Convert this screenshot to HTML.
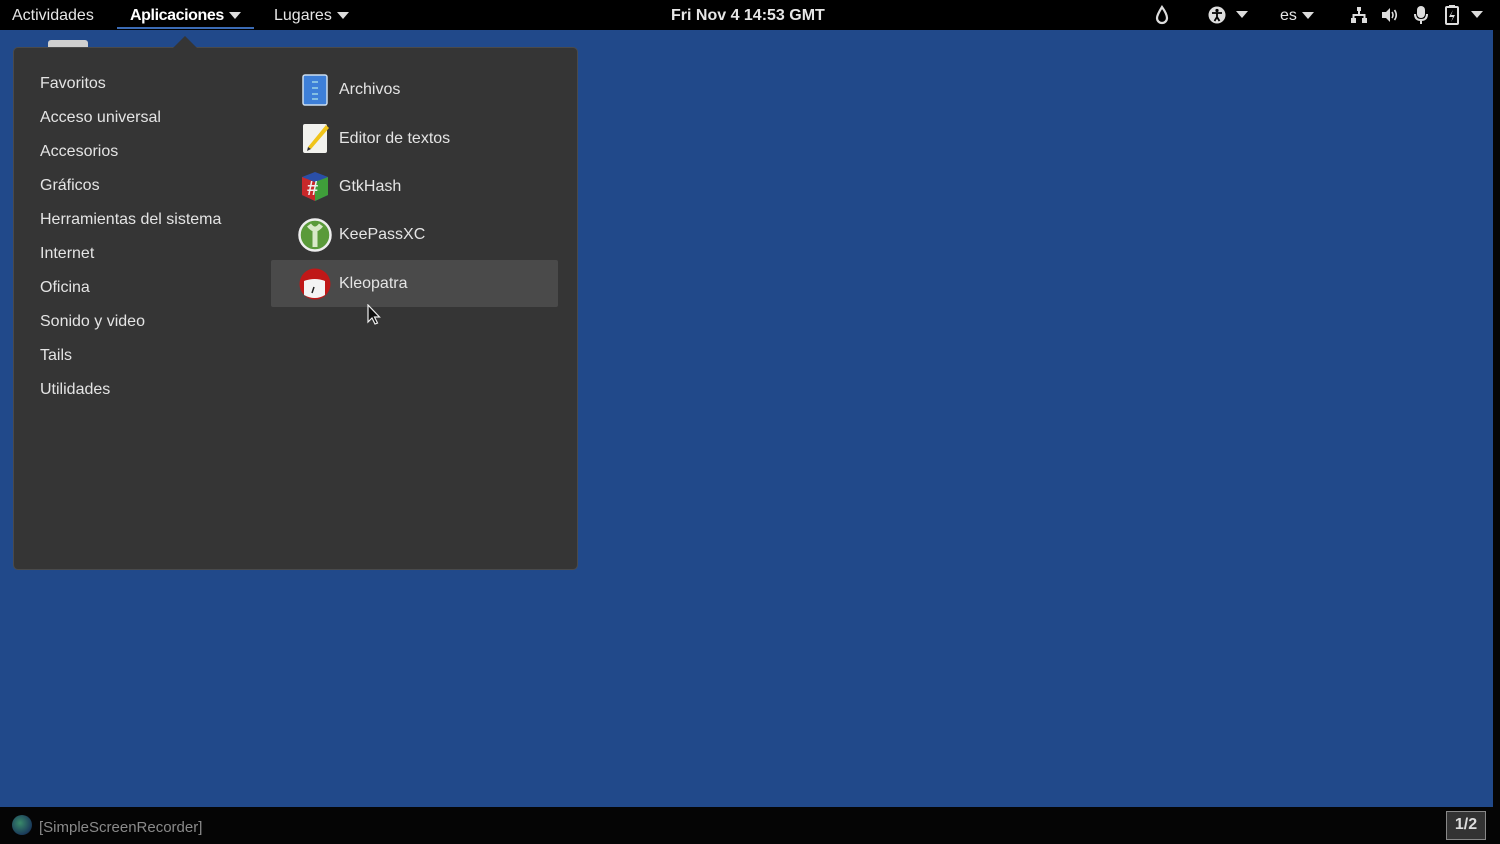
<!DOCTYPE html>
<html><head><meta charset="utf-8"><style>
*{margin:0;padding:0;box-sizing:border-box}
body{width:1500px;height:844px;background:#050505;position:relative;overflow:hidden;font-family:"Liberation Sans","DejaVu Sans",sans-serif;color:#e8e8e8}
.top{position:absolute;left:0;top:0;width:1500px;height:30px;background:#000;font-size:16px}
.top span{position:absolute;top:7px;color:#e6e6e6}
.tri{display:inline-block;width:0;height:0;border-left:6px solid transparent;border-right:6px solid transparent;border-top:7px solid #ddd;vertical-align:middle;margin-left:5px}
.desk{position:absolute;left:0;top:30px;width:1493px;height:777px;background:#21498a}
.menu{position:absolute;left:13px;top:47px;width:565px;height:523px;background:#353535;border:1px solid #4a4a4a;border-radius:5px}
.arrow{position:absolute;left:173px;top:36px;width:0;height:0;border-left:12px solid transparent;border-right:12px solid transparent;border-bottom:12px solid #353535}
.cat{position:absolute;left:40px;font-size:16px;color:#e4e4e4}
.app{position:absolute;left:339px;font-size:16px;color:#e4e4e4}
.hl{position:absolute;left:271px;top:260px;width:287px;height:47px;background:#4a4a4a;border-radius:2px}
.bot{position:absolute;left:0;top:807px;width:1500px;height:37px;background:#050505}
</style></head><body>
<div class="top">
<span style="left:12px">Actividades</span>
<span style="left:130px;color:#fff;font-weight:bold;letter-spacing:-0.4px">Aplicaciones<i class="tri"></i></span>
<div style="position:absolute;left:117px;top:27px;width:137px;height:2px;background:#3b6bb5"></div>
<span style="left:274px">Lugares<i class="tri"></i></span>
<span style="left:671px;font-weight:bold">Fri Nov 4  14:53 GMT</span>
<svg style="position:absolute;left:1153px;top:5px" width="18" height="20"><path d="M9 2 Q4 10 4 13 A5 5 0 0 0 14 13 Q14 9 9 2Z" fill="none" stroke="#ddd" stroke-width="2.2"/></svg>
<svg style="position:absolute;left:1208px;top:6px" width="18" height="18"><circle cx="9" cy="9" r="8.5" fill="#ddd"/><circle cx="9" cy="4.5" r="1.6" fill="#000"/><path d="M4 7h10M9 7v4l-2.5 4M9 11l2.5 4" stroke="#000" stroke-width="1.8" fill="none"/></svg>
<span style="left:1236px;top:6px"><i class="tri" style="margin:0"></i></span>
<span style="left:1280px">es<i class="tri"></i></span>
<svg style="position:absolute;left:1350px;top:6px" width="18" height="18"><rect x="7" y="1" width="4" height="4" fill="#ddd"/><rect x="1" y="12" width="5" height="5" fill="#ddd"/><rect x="12" y="12" width="5" height="5" fill="#ddd"/><path d="M9 5v4M3.5 12V9h11v3" stroke="#ddd" stroke-width="2" fill="none"/></svg>
<svg style="position:absolute;left:1381px;top:6px" width="18" height="18"><path d="M1 6h4l4-4v14l-4-4H1z" fill="#ddd"/><path d="M11 6q2 3 0 6M13.5 4q3.5 5 0 10" stroke="#ddd" stroke-width="1.6" fill="none"/></svg>
<svg style="position:absolute;left:1413px;top:5px" width="16" height="20"><rect x="4" y="1" width="8" height="12" rx="4" fill="#ddd"/><path d="M2 9q0 6 6 6q6 0 6-6M8 15v4" stroke="#ddd" stroke-width="2" fill="none"/></svg>
<svg style="position:absolute;left:1444px;top:4px" width="16" height="22"><rect x="2" y="3" width="12" height="17" rx="1" fill="none" stroke="#ddd" stroke-width="2"/><rect x="5" y="1" width="6" height="3" fill="#ddd"/><path d="M9 6l-4 7h4l-2 5 4-7H7z" fill="#ddd"/></svg>
<span style="left:1471px;top:6px"><i class="tri" style="margin:0"></i></span>
</div>
<div class="desk"></div>
<div style="position:absolute;left:48px;top:40px;width:40px;height:8px;background:#cfcfcf;border-radius:3px 3px 0 0"></div>
<div class="menu"></div>
<div class="arrow"></div>
<div class="hl"></div>
<div class="cat" style="top:75px">Favoritos</div>
<div class="cat" style="top:109px">Acceso universal</div>
<div class="cat" style="top:143px">Accesorios</div>
<div class="cat" style="top:177px">Gráficos</div>
<div class="cat" style="top:211px">Herramientas del sistema</div>
<div class="cat" style="top:245px">Internet</div>
<div class="cat" style="top:279px">Oficina</div>
<div class="cat" style="top:313px">Sonido y video</div>
<div class="cat" style="top:347px">Tails</div>
<div class="cat" style="top:381px">Utilidades</div>

<svg style="position:absolute;left:302px;top:74px" width="26" height="32"><rect x="1" y="1" width="24" height="30" rx="2" fill="#3d7fd8" stroke="#cde" stroke-width="1.5"/><path d="M10 8h6M10 14h6M10 20h6M10 25h6" stroke="#cfe" stroke-width="1"/></svg>
<div class="app" style="top:81px">Archivos</div>
<svg style="position:absolute;left:302px;top:122px" width="28" height="32"><rect x="1" y="2" width="24" height="29" rx="2" fill="#f2f2ee"/><path d="M6 25L24 3l3 3L9 27z" fill="#f0c419"/><path d="M6 25l-1 4 4-2" fill="#333"/></svg>
<div class="app" style="top:130px">Editor de textos</div>
<svg style="position:absolute;left:298px;top:169px" width="34" height="34"><path d="M4 8L17 3l13 5v18l-13 6-13-6z" fill="#2a4fa8"/><path d="M4 8l13 5v19L4 26z" fill="#c8282a"/><path d="M17 13l13-5v18l-13 6z" fill="#3f9e3a"/><text x="9" y="26" font-size="20" font-weight="bold" fill="#eee" font-family="Liberation Sans">#</text></svg>
<div class="app" style="top:178px">GtkHash</div>
<svg style="position:absolute;left:298px;top:218px" width="34" height="34"><circle cx="17" cy="17" r="15.5" fill="#5a9a3a" stroke="#eee" stroke-width="2.5"/><path d="M11 7q6 8 12 0M17 12v17" stroke="#d8e8c8" stroke-width="5" fill="none"/></svg>
<div class="app" style="top:226px">KeePassXC</div>
<svg style="position:absolute;left:298px;top:267px" width="34" height="34"><circle cx="17" cy="17" r="15.5" fill="#c01818"/><path d="M6 14q11-4 21 0v14q-10 6-21 0z" fill="#f4f4f4"/><path d="M14 26l2-6" stroke="#222" stroke-width="1.5"/></svg>
<div class="app" style="top:275px">Kleopatra</div>
<svg style="position:absolute;left:366px;top:304px" width="16" height="22"><path d="M2 1v17l4-4 3 6 2.5-1-3-6h5z" fill="#111" stroke="#eee" stroke-width="1.2"/></svg>

<div class="bot">
<div style="position:absolute;left:12px;top:8px;width:20px;height:20px;border-radius:50%;background:radial-gradient(circle at 40% 40%,#3a8a6a,#1a3a5a 70%,#111)"></div>
<div style="position:absolute;left:39px;top:12px;font-size:15px;color:#8a8a8a">[SimpleScreenRecorder]</div>
<div style="position:absolute;left:1446px;top:4px;width:40px;height:29px;background:#333;border:1px solid #888;color:#ddd;font-size:16px;font-weight:bold;text-align:center;line-height:26px">1/2</div>
</div>
</body></html>
